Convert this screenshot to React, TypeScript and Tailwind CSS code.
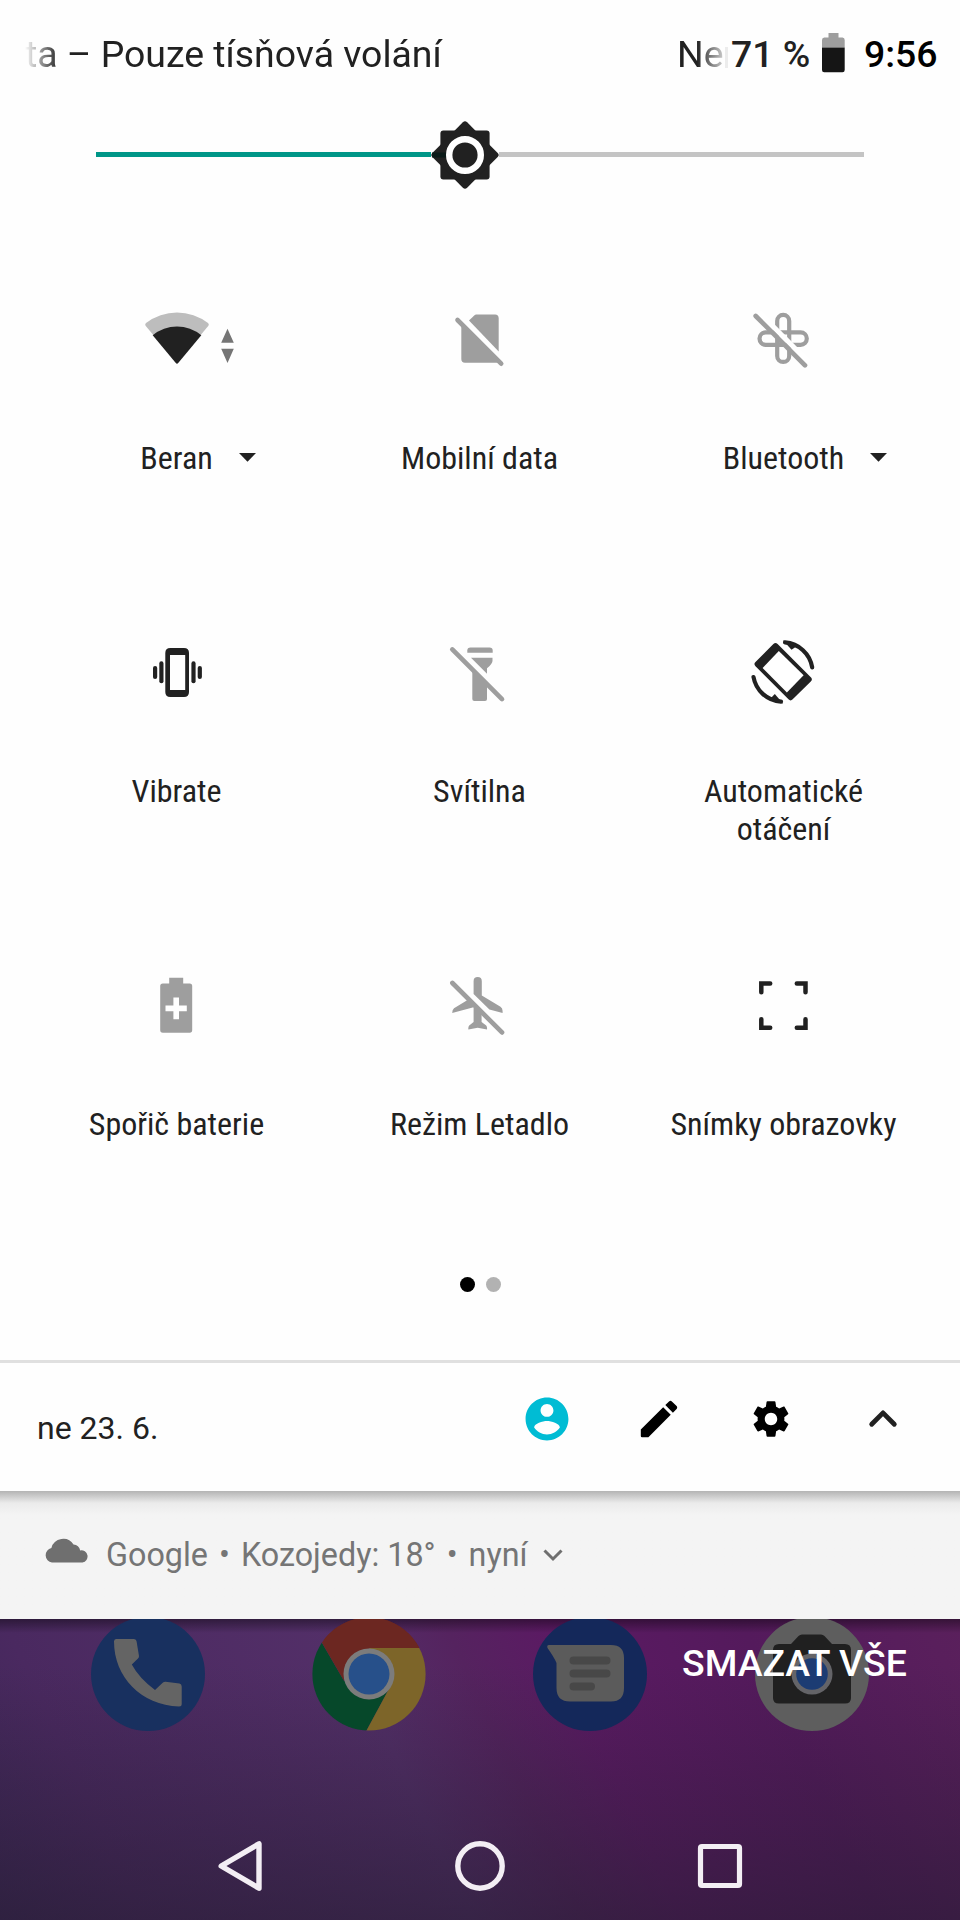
import type { ReactNode } from 'react';

const Icon = ({ children }: { children: ReactNode }) => (
  <svg width="96" height="96" viewBox="0 0 96 96" className="block shrink-0 overflow-visible">
    {children}
  </svg>
);

const WifiIcon = () => (
  <Icon>
    <path d="M49 73.5 17.6 35.8Q16.6 34.2 18 33A51 51 0 0 1 80 33Q81.4 34.2 80.4 35.8Z" fill="#bdbdbd" />
    <path d="M47.8 73 24.7 45.3A38 38 0 0 1 73.3 45.3L50.2 73Q49 74.4 47.8 73Z" fill="#212121" />
    <path d="M99.5 38.7 105.8 52.8H93.2ZM99.5 73 105.8 58.8H93.2Z" fill="#757575" />
  </Icon>
);

const SimOffIcon = () => (
  <Icon>
    <g fill="#9e9e9e">
      <path d="M38 30.5 43.5 25.2Q44.2 24.6 45.2 24.6H64Q67.7 24.6 67.7 28.4V61.5Z" />
      <path d="M30.3 34V69Q30.3 72.7 34 72.7H65.5L68 72Z" />
    </g>
    <path d="M26.5 30 70.2 73.7" stroke="#9e9e9e" strokeWidth="4.6" strokeLinecap="round" />
  </Icon>
);

const BluetoothOffIcon = () => (
  <Icon>
    <g fill="none" stroke="#9e9e9e" strokeWidth="4.2">
      <rect x="42.2" y="24.9" width="12" height="47" rx="6" />
      <rect x="24.5" y="42.4" width="47.3" height="12.4" rx="6.2" />
    </g>
    <path d="M24.2 22.6 73.5 71.9" stroke="#fff" strokeWidth="5" />
    <path d="M20.7 26 70 75.3" stroke="#9e9e9e" strokeWidth="4.7" strokeLinecap="round" />
  </Icon>
);

const VibrateIcon = () => (
  <Icon>
    <g fill="#212121">
      <path
        fillRule="evenodd"
        d="M42.3 25H56Q61 25 61 30V69Q61 74 56 74H42.3Q37.3 74 37.3 69V30Q37.3 25 42.3 25ZM42 32V67H57.2V32Z"
      />
      <rect x="31.3" y="38.3" width="4.2" height="22" rx="2.1" />
      <rect x="25" y="43" width="4.2" height="13" rx="2.1" />
      <rect x="63.4" y="38.3" width="4.2" height="22" rx="2.1" />
      <rect x="69.7" y="43" width="4.2" height="13" rx="2.1" />
    </g>
  </Icon>
);

const FlashlightOffIcon = () => (
  <Icon>
    <g fill="#9e9e9e">
      <path d="M36.3 29.7V27.5Q36.3 24.4 39.5 24.4H58.5Q61.7 24.4 61.7 27.5V29.7Z" />
      <path d="M40 34.8H61.5V38Q61.3 41 56 45.2V50.8Z" />
      <path d="M41.3 46.5 56 61V76Q56 78 54 78H43.3Q41.3 78 41.3 76Z" />
    </g>
    <path d="M21.3 26.4 71 76.1" stroke="#9e9e9e" strokeWidth="4.7" strokeLinecap="round" />
  </Icon>
);

const RotateIcon = () => (
  <Icon>
    <path
      d="M40.5 23.2 22.6 41.1 55.6 74.2 73.7 56.4Z"
      fill="#212121"
      stroke="#212121"
      strokeWidth="6"
      strokeLinejoin="round"
    />
    <path d="M43.8 28 27.6 44.9 51.9 69.6 68.6 52.3Z" fill="#fff" />
    <g fill="none" stroke="#212121" strokeWidth="4.2" strokeLinecap="round">
      <path d="M77.2 44.4A29.8 29.8 0 0 0 50 19.4" />
      <path d="M18.5 54A29.8 29.8 0 0 0 46 78.6" />
    </g>
    <path d="M48 17.3 63.5 22 56.5 26.8Z" fill="#212121" />
    <path d="M48 80.6 34 77 39.8 71Z" fill="#212121" />
  </Icon>
);

const BatterySaverIcon = () => (
  <Icon>
    <path
      d="M41.2 21.7H55.2V27.4H61.7Q64.2 27.4 64.2 30V74Q64.2 76.7 61.7 76.7H34.8Q32.2 76.7 32.2 74V30Q32.2 27.4 34.8 27.4H41.2Z"
      fill="#9e9e9e"
    />
    <path d="M45.4 41.6H51V49.6H58.8V55.2H51V63.2H45.4V55.2H37.5V49.6H45.4Z" fill="#fff" />
  </Icon>
);

const AirplaneOffIcon = () => (
  <Icon>
    <g fill="#9e9e9e">
      <path d="M42.6 38V25.2Q42.6 21 46.7 21T50.8 25.2V39.4L69.5 50.8Q71.6 52.2 71.6 55V57L58.4 53.6Z" />
      <path d="M37.4 43.4 23 52.2Q21.2 53.6 21.2 57L42.6 51.3V66L38.2 69.6Q37 71 37.4 73.6L46.7 71.8 56 73.6Q56.4 71 55.2 69.6L50.6 66V58Z" />
    </g>
    <path d="M21.4 27 71 76.4" stroke="#9e9e9e" strokeWidth="4.7" strokeLinecap="round" />
  </Icon>
);

const ScreenshotIcon = () => (
  <Icon>
    <g fill="none" stroke="#212121" strokeWidth="4.5" strokeLinecap="round">
      <path d="M26.3 36.2V27.5H35.2" />
      <path d="M61.8 27.5H70.5V36.2" />
      <path d="M26.3 63.3V71.8H35.2" />
      <path d="M61.8 71.8H70.5V63.3" />
    </g>
  </Icon>
);

const tiles = [
  { label: 'Beran', icon: <WifiIcon />, expandable: true },
  { label: 'Mobilní data', icon: <SimOffIcon /> },
  { label: 'Bluetooth', icon: <BluetoothOffIcon />, expandable: true },
  { label: 'Vibrate', icon: <VibrateIcon /> },
  { label: 'Svítilna', icon: <FlashlightOffIcon /> },
  { label: 'Automatické otáčení', icon: <RotateIcon /> },
  { label: 'Spořič baterie', icon: <BatterySaverIcon /> },
  { label: 'Režim Letadlo', icon: <AirplaneOffIcon /> },
  { label: 'Snímky obrazovky', icon: <ScreenshotIcon /> },
];

const StatusBar = () => (
  <header className="flex h-[109px] items-center pl-[25px] text-[37.4px] leading-none text-[#212121]">
    <span className="w-[652px] whitespace-nowrap [mask-image:linear-gradient(to_right,transparent,black_34px)]">
      ta – Pouze tísňová volání
    </span>
    <span className="w-[48px] whitespace-nowrap [mask-image:linear-gradient(to_right,black_20px,transparent_54px)]">
      Ne
    </span>
    <span className="mt-[6px] h-[21px] w-[3px] bg-[#ececec]" />
    <span className="ml-[3px] w-[91px] whitespace-nowrap font-medium">71 %</span>
    <svg width="23" height="40" viewBox="0 0 23 40" className="-mt-[3px]">
      <path d="M6.5 0H16.5V4.5H20.5Q22.7 4.5 22.7 7V14.5H0V7Q0 4.5 2.3 4.5H6.5Z" fill="#9e9e9e" />
      <path d="M0 14.5H22.7V37Q22.7 39.3 20.5 39.3H2.2Q0 39.3 0 37Z" fill="#151515" />
    </svg>
    <span className="ml-[19px] font-medium text-black">9:56</span>
  </header>
);

const BrightnessSlider = () => (
  <div className="flex h-[91px] items-center px-24">
    <div className="h-[5px] w-[335px] bg-[#009688]" />
    <svg width="68" height="68" viewBox="-34 -34 68 68" className="shrink-0">
      <rect x="-24.6" y="-24.6" width="49.2" height="49.2" rx="3" fill="#212121" />
      <rect x="-24.6" y="-24.6" width="49.2" height="49.2" rx="3" fill="#212121" transform="rotate(45)" />
      <path d="M-33-2.5H-19V2.5H-33Z" fill="#0b1a18" />
      <circle r="15.8" fill="#212121" stroke="#fff" strokeWidth="6.4" />
    </svg>
    <div className="h-[5px] flex-1 bg-[#c4c4c4]" />
  </div>
);

const Tiles = () => (
  <div className="ml-6 mt-[90px] grid grid-cols-[304px_302px_306px] grid-rows-[333px_333px_266px]">
    {tiles.map((tile) => (
      <div key={tile.label} className="flex flex-col items-center">
        {tile.icon}
        <div className="mt-[54px] flex items-center pl-px font-['Roboto_Condensed','Roboto',sans-serif] text-[32px] leading-[37.5px] text-[#212121]">
          {tile.expandable && <span className="w-[43px]" />}
          <span className="max-w-[240px] text-center">{tile.label}</span>
          {tile.expandable && (
            <svg width="17" height="9" viewBox="0 0 17 9" className="-mt-[3px] ml-[26px] shrink-0">
              <path d="M0 0H17L8.5 8.8Z" fill="#212121" />
            </svg>
          )}
        </div>
      </div>
    ))}
  </div>
);

const PageIndicator = () => (
  <div className="flex h-[138px] justify-center gap-[11px] pt-[55px]">
    <span className="size-[15px] rounded-full bg-black" />
    <span className="size-[15px] rounded-full bg-[#b2b2b2]" />
  </div>
);

const PanelFooter = () => (
  <div className="flex h-[131px] items-start border-t-[3px] border-[#e0e0e0] pl-[37px]">
    <span className="mt-[46px] w-[482px] text-[32px] leading-[38px] text-[#212121]">ne 23. 6.</span>
    <div className="mt-[28px] flex items-center">
      <svg width="56" height="56" viewBox="-1.07 -1.07 26.14 26.14" fill="#00bcd4">
        <path d="M12 2C6.48 2 2 6.48 2 12s4.48 10 10 10 10-4.48 10-10S17.52 2 12 2zm0 3c1.66 0 3 1.34 3 3s-1.34 3-3 3-3-1.34-3-3 1.34-3 3-3zm0 14.2c-2.5 0-4.71-1.28-6-3.22.03-1.99 4-3.08 6-3.08 1.99 0 5.97 1.09 6 3.08-1.29 1.94-3.5 3.22-6 3.22z" />
      </svg>
      <svg width="56" height="56" viewBox="-1.85 -1.85 27.7 27.7" className="ml-14">
        <path d="M3 17.25V20.4Q3 21 3.6 21H6.75L17.81 9.94l-3.75-3.75L3 17.25zM20.71 7.04c.39-.39.39-1.02 0-1.41l-2.34-2.34a.996.996 0 0 0-1.41 0l-1.83 1.83 3.75 3.75 1.83-1.83z" />
      </svg>
      <svg width="56" height="56" viewBox="-3.7 -3.7 31.4 31.4" className="ml-14">
        <path d="M19.43 12.98c.04-.32.07-.64.07-.98s-.03-.66-.07-.98l2.11-1.65c.19-.15.24-.42.12-.64l-2-3.46c-.12-.22-.39-.3-.61-.22l-2.49 1c-.52-.4-1.08-.73-1.69-.98l-.38-2.65C14.46 2.18 14.25 2 14 2h-4c-.25 0-.46.18-.49.42l-.38 2.65c-.61.25-1.17.59-1.69.98l-2.49-1c-.23-.09-.49 0-.61.22l-2 3.46c-.13.22-.07.49.12.64l2.11 1.65c-.04.32-.07.65-.07.98s.03.66.07.98l-2.11 1.65c-.19.15-.24.42-.12.64l2 3.46c.12.22.39.3.61.22l2.49-1c.52.4 1.08.73 1.69.98l.38 2.65c.03.24.24.42.49.42h4c.25 0 .46-.18.49-.42l.38-2.65c.61-.25 1.17-.59 1.69-.98l2.49 1c.23.09.49 0 .61-.22l2-3.46c.12-.22.07-.49-.12-.64l-2.11-1.65zM12 15.5c-1.93 0-3.5-1.57-3.5-3.5s1.57-3.5 3.5-3.5 3.5 1.57 3.5 3.5-1.57 3.5-3.5 3.5z" />
      </svg>
      <svg width="56" height="56" viewBox="0 0 56 56" className="ml-14">
        <path
          d="M16.7 33.2 28 21.9 39.3 33.2"
          fill="none"
          stroke="#212121"
          strokeWidth="4.8"
          strokeLinecap="round"
          strokeLinejoin="round"
        />
      </svg>
    </div>
  </div>
);

const Notification = () => (
  <div className="flex h-[128px] items-center bg-linear-to-b from-[#b4b4b4] via-[#ebebeb] via-[12px] to-[#f4f4f4] to-[24px] pl-[44px] text-[32.3px] leading-none text-[#757575]">
    <svg width="45" height="25" viewBox="0 0 45 25" className="-mt-[9px]">
      <path
        d="M8 24.6A7.5 7.5 0 0 1 7.400 9.9 12.2 12.2 0 0 1 29.5 6.400Q35 6.8 36.200 12.400A6.200 6.200 0 0 1 38.5 24.6Z"
        fill="#6f6f6f"
      />
    </svg>
    <span className="ml-[17px] whitespace-nowrap">
      Google <span className="mx-[3px]">•</span> Kozojedy: 18° <span className="mx-[3px]">•</span> nyní
    </span>
    <svg width="20" height="13" viewBox="0 0 20 13" className="ml-[15px]">
      <path d="M1.5 1.5 10 10 18.5 1.5" fill="none" stroke="#6f6f6f" strokeWidth="3" />
    </svg>
  </div>
);

const Launcher = () => (
  <div className="-mt-[2px] flex items-start gap-[107.3px] pl-[90.7px]">
    <svg width="114" height="114" viewBox="0 0 114 114">
      <circle cx="57" cy="57" r="57" fill="#18305f" />
      <path
        d="M25 22H43Q45.4 22 45.6 24.5L48 39Q48 40.6 47 41.6L40.8 47.5Q48 61 64 73L72 65.5Q73 64.6 74.5 64.7L88.5 66.5Q90.7 67 90.7 69.5V87Q90.7 89.5 88 89.5C50 88 23 60 23 24.5Q23 22 25 22Z"
        fill="#646464"
      />
    </svg>
    <svg width="114" height="114" viewBox="0 0 114 114">
      <clipPath id="chrome-disc">
        <circle cx="57" cy="57" r="56.6" />
      </clipPath>
      <g clipPath="url(#chrome-disc)">
        <path d="M0 0H114V31H57L32 64Z" fill="#6c2721" />
        <path d="M-5 0 32 64 78 70 52 118H-5Z" fill="#06482a" />
        <path d="M57 31H120V120H51L78 70Z" fill="#7d6529" />
        <path d="M-5 0H114V31H57L31 62Z" fill="#6c2721" />
      </g>
      <circle cx="57" cy="57" r="25.5" fill="#7c7c7c" />
      <circle cx="57" cy="57" r="20.5" fill="#27508a" />
    </svg>
    <svg width="114" height="114" viewBox="0 0 114 114">
      <circle cx="57" cy="57" r="57" fill="#14285a" />
      <path
        d="M16 28H78Q91 28 91 41V71Q91 84.5 78 84.5H37Q23.5 84.5 23.5 71V46Q21 40 14.5 31Q13.5 28 16 28Z"
        fill="#5b5b5b"
      />
      <path
        d="M40.5 43.5H73.5M40.5 56.5H73.5M40.5 69.5H58"
        stroke="#484848"
        strokeWidth="8"
        strokeLinecap="round"
      />
    </svg>
    <svg width="114" height="114" viewBox="0 0 114 114">
      <circle cx="57" cy="57" r="57" fill="#5e5e5e" />
      <path
        d="M24 27H36L43.5 19Q45 17.5 47 17.5H66Q68 17.5 69.5 19L77 27H90Q96 27 96 33V81Q96 86.5 90 86.5H24Q18 86.5 18 81V33Q18 27 24 27Z"
        fill="#202020"
      />
      <circle cx="57" cy="57" r="20.5" fill="#646468" />
      <circle cx="57" cy="57" r="15.8" fill="#1c3c73" />
    </svg>
  </div>
);

const NavBar = () => (
  <div className="flex items-center gap-[184px] pl-[212px] pt-[107px]">
    <svg width="56" height="56" viewBox="0 0 56 56">
      <path d="M9.2 28 47 5.8V50.2Z" fill="none" stroke="#f3eef4" strokeWidth="5.4" strokeLinejoin="round" />
    </svg>
    <svg width="56" height="56" viewBox="0 0 56 56">
      <circle cx="28" cy="28" r="22.2" fill="none" stroke="#f3eef4" strokeWidth="5.4" />
    </svg>
    <svg width="56" height="56" viewBox="0 0 56 56">
      <rect x="8.5" y="8.5" width="39" height="39" rx="1.5" fill="none" stroke="#f3eef4" strokeWidth="5.2" />
    </svg>
  </div>
);

const App = () => {
  return (
    <div className="flex h-[1920px] w-[960px] flex-col overflow-hidden bg-[#fefefe] font-['Roboto',sans-serif]">
      <StatusBar />
      <BrightnessSlider />
      <Tiles />
      <PageIndicator />
      <PanelFooter />
      <Notification />
      <div className="relative h-[301px] overflow-hidden bg-[linear-gradient(to_bottom,#0006,transparent_14px),linear-gradient(to_bottom,transparent_15%,#241c3099),linear-gradient(65deg,#3f2858,#4a2960_13%,#532f68_43%,#55235f_53%,#5b1a63_62%,#541a5c_80%,#5a205c)]">
        <Launcher />
        <NavBar />
        <span className="absolute left-[682px] top-[22px] whitespace-nowrap text-[37.4px] font-medium leading-[44px] text-white">
          SMAZAT VŠE
        </span>
      </div>
    </div>
  );
};

export default App;
